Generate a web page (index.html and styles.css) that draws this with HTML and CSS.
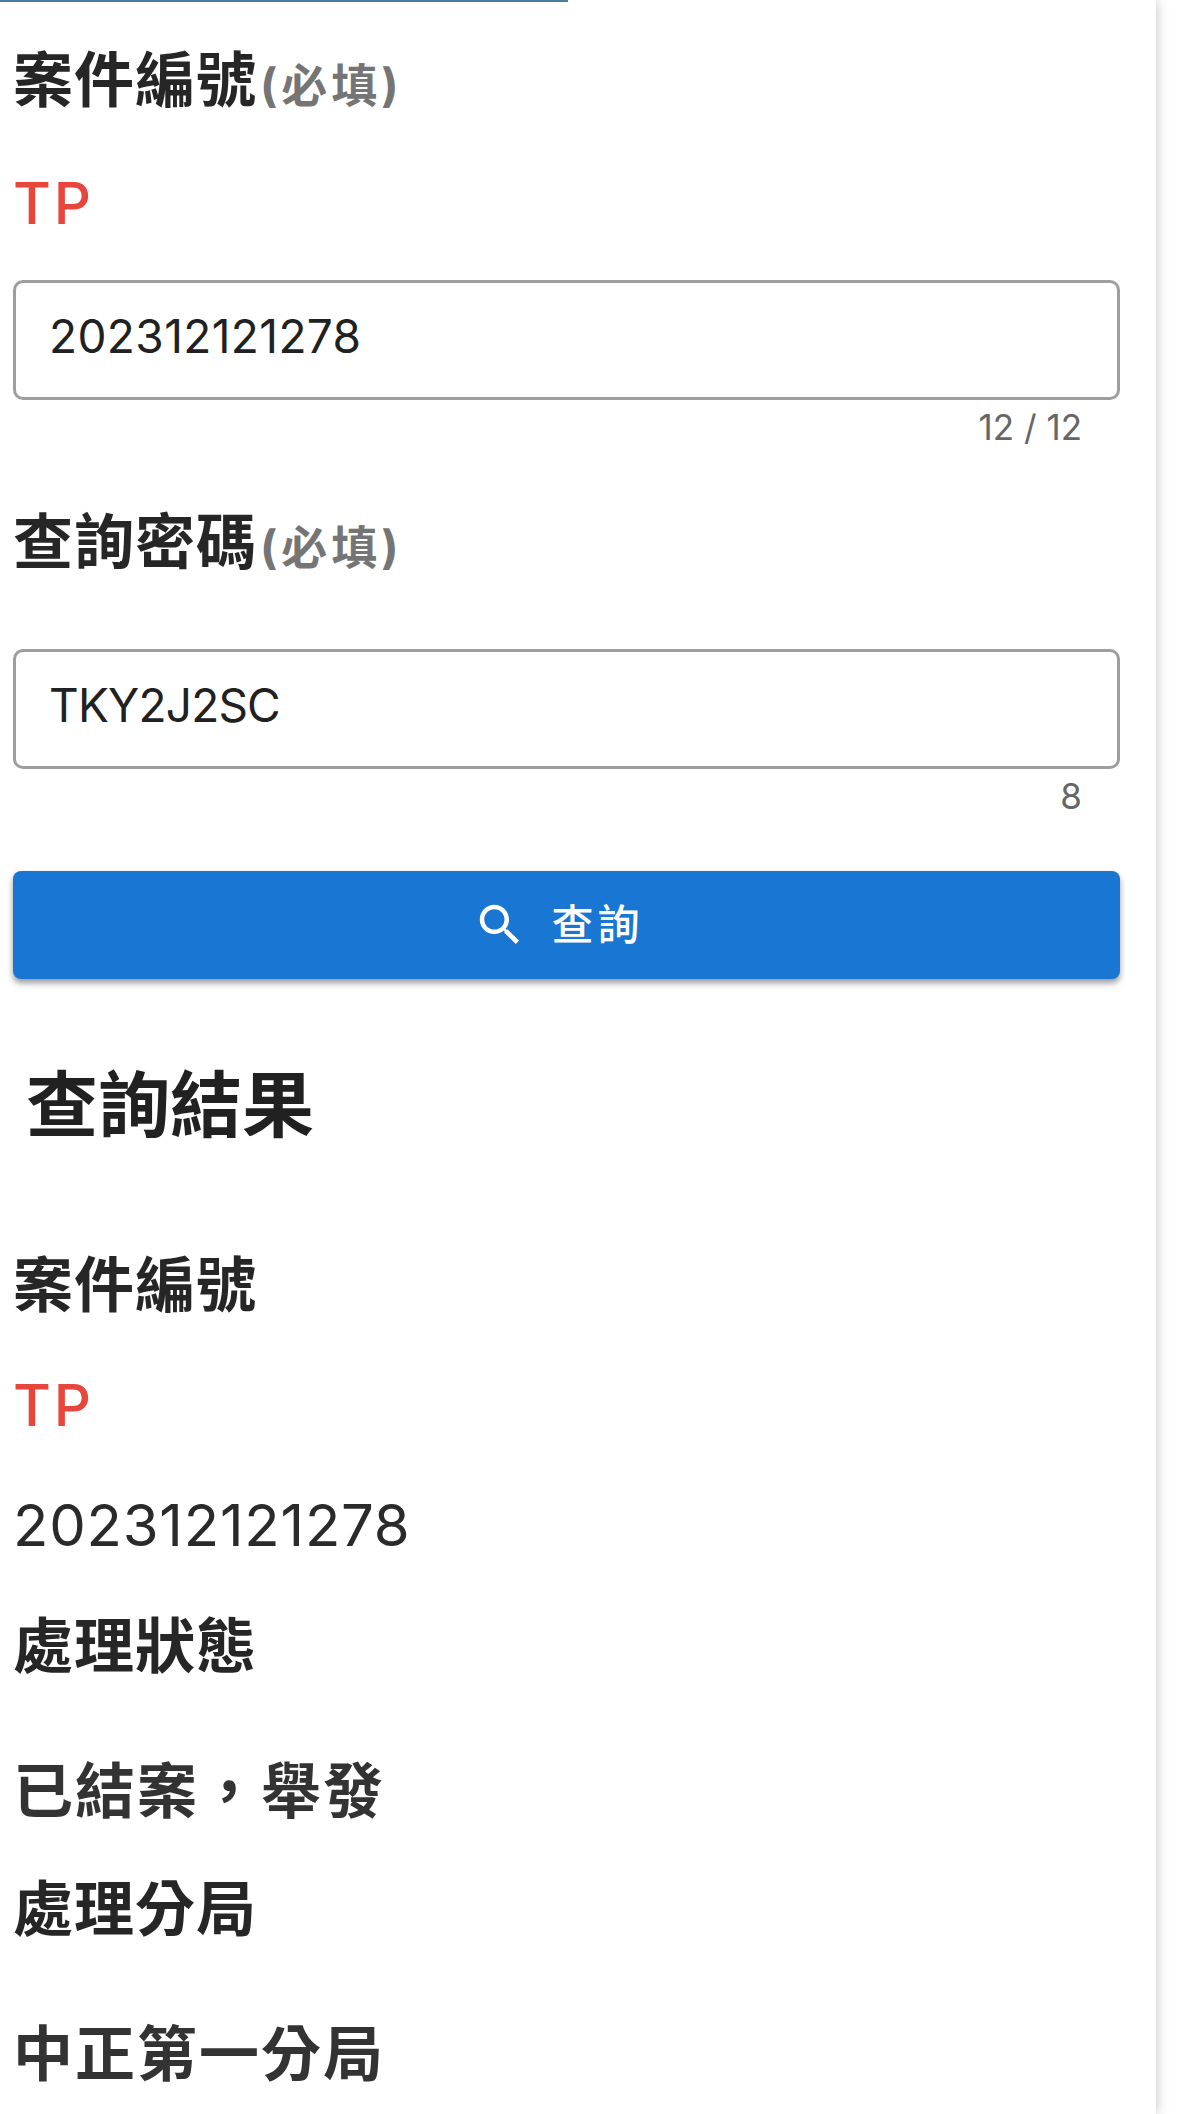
FILE: index.html
```html
<!DOCTYPE html>
<html lang="zh-Hant">
<head>
    <meta charset="UTF-8">
    <meta name="viewport" content="width=device-width, initial-scale=1.0">
    <title>案件查詢</title>
    <link rel="stylesheet" href="styles.css">
</head>
<body>
    <div class="panel">
        <div class="top-line"></div>

        <div class="label first">案件編號<span class="required">(必填)</span></div>
        <div class="prefix">TP</div>
        <div class="field">202312121278</div>
        <div class="counter">12 / 12</div>

        <div class="label second">查詢密碼<span class="required">(必填)</span></div>
        <div class="field no-prefix">TKY2J2SC</div>
        <div class="counter">8</div>

        <button class="search-btn" type="button">
            <svg class="search-icon" viewBox="0 0 24 24"><path d="M15.5 14h-.79l-.28-.27C15.41 12.59 16 11.11 16 9.5 16 5.91 13.09 3 9.5 3S3 5.91 3 9.5 5.91 16 9.5 16c1.61 0 3.09-.59 4.23-1.57l.27.28v.79l5 4.99L20.49 19l-4.99-5zm-6 0C7.01 14 5 11.99 5 9.5S7.01 5 9.5 5 14 7.01 14 9.5 11.99 14 9.5 14z"/></svg>
            <span class="search-text">查詢</span>
        </button>

        <h2 class="result-title">查詢結果</h2>

        <div class="row-label result-first">案件編號</div>
        <div class="row-prefix">TP</div>
        <div class="row-number">202312121278</div>
        <div class="row-label status">處理狀態</div>
        <div class="row-value">已結案，舉發</div>
        <div class="row-label office">處理分局</div>
        <div class="row-value">中正第一分局</div>
    </div>
</body>
</html>
```

FILE: styles.css
```css
html, body {
    margin: 0;
    padding: 0;
    height: 100%;
    overflow: hidden;
    background-color: #fff;
    font-family: "Inter", "Noto Sans CJK TC", sans-serif;
}
.panel {
    width: 1156px;
    height: 2114px;
    box-sizing: border-box;
    padding: 0 36px 0 13px;
    background-color: #fff;
    box-shadow: 0 0 12px rgba(0, 0, 0, 0.25);
    overflow: hidden;
}
.top-line {
    width: 568px;
    height: 2px;
    margin-left: -13px;
    background-color: #4a7a9c;
}
.label {
    font-size: 60px;
    line-height: 80px;
    letter-spacing: 1px;
    font-weight: 700;
    color: #262626;
}
.first {
    margin-top: 38px;
}
.second {
    margin-top: 53px;
}
.required {
    font-size: 46px;
    letter-spacing: 4px;
    color: #757575;
    margin-left: 3px;
}
.prefix {
    margin-top: 43px;
    font-size: 58px;
    line-height: 70px;
    letter-spacing: 3px;
    font-weight: 500;
    color: #e8453c;
}
.field {
    width: 1107px;
    height: 120px;
    box-sizing: border-box;
    margin-top: 42px;
    padding: 25px 33px 0;
    border: 3px solid #9e9e9e;
    border-radius: 10px;
    font-size: 46px;
    line-height: 56px;
    letter-spacing: 0.4px;
    color: #212121;
}
.no-prefix {
    margin-top: 62px;
    letter-spacing: -0.8px;
}
.counter {
    width: 1069px;
    margin-top: 5px;
    font-size: 35px;
    line-height: 44px;
    text-align: right;
    color: #666;
}
.search-btn {
    display: flex;
    justify-content: center;
    align-items: center;
    gap: 24px;
    width: 1107px;
    height: 108px;
    margin-top: 53px;
    padding: 0 16px 0 0;
    border: 0;
    border-radius: 8px;
    background-color: #1976d2;
    box-shadow: 0 4px 6px rgba(0, 0, 0, 0.4);
    color: #fff;
    font-family: inherit;
    font-size: 42px;
    font-weight: 500;
    letter-spacing: 4px;
}
.search-icon {
    width: 54px;
    height: 54px;
    fill: #fff;
}
.search-text {
    margin-bottom: 8px;
}
.result-title {
    margin: 76px 0 0 13px;
    font-size: 72px;
    line-height: 100px;
    font-weight: 700;
    color: #212121;
}
.row-label {
    font-size: 60px;
    line-height: 80px;
    letter-spacing: 1px;
    font-weight: 700;
    color: #262626;
}
.result-first {
    margin-top: 90px;
}
.status {
    margin-top: 46px;
}
.office {
    margin-top: 38px;
}
.row-prefix {
    margin-top: 45px;
    font-size: 58px;
    line-height: 70px;
    letter-spacing: 3px;
    font-weight: 500;
    color: #e8453c;
}
.row-number {
    margin-top: 50px;
    font-size: 58px;
    line-height: 70px;
    letter-spacing: 0.8px;
    color: #2a2a2a;
}
.row-value {
    margin-top: 65px;
    font-size: 60px;
    line-height: 80px;
    letter-spacing: 2px;
    font-weight: 700;
    color: #333;
}
```
